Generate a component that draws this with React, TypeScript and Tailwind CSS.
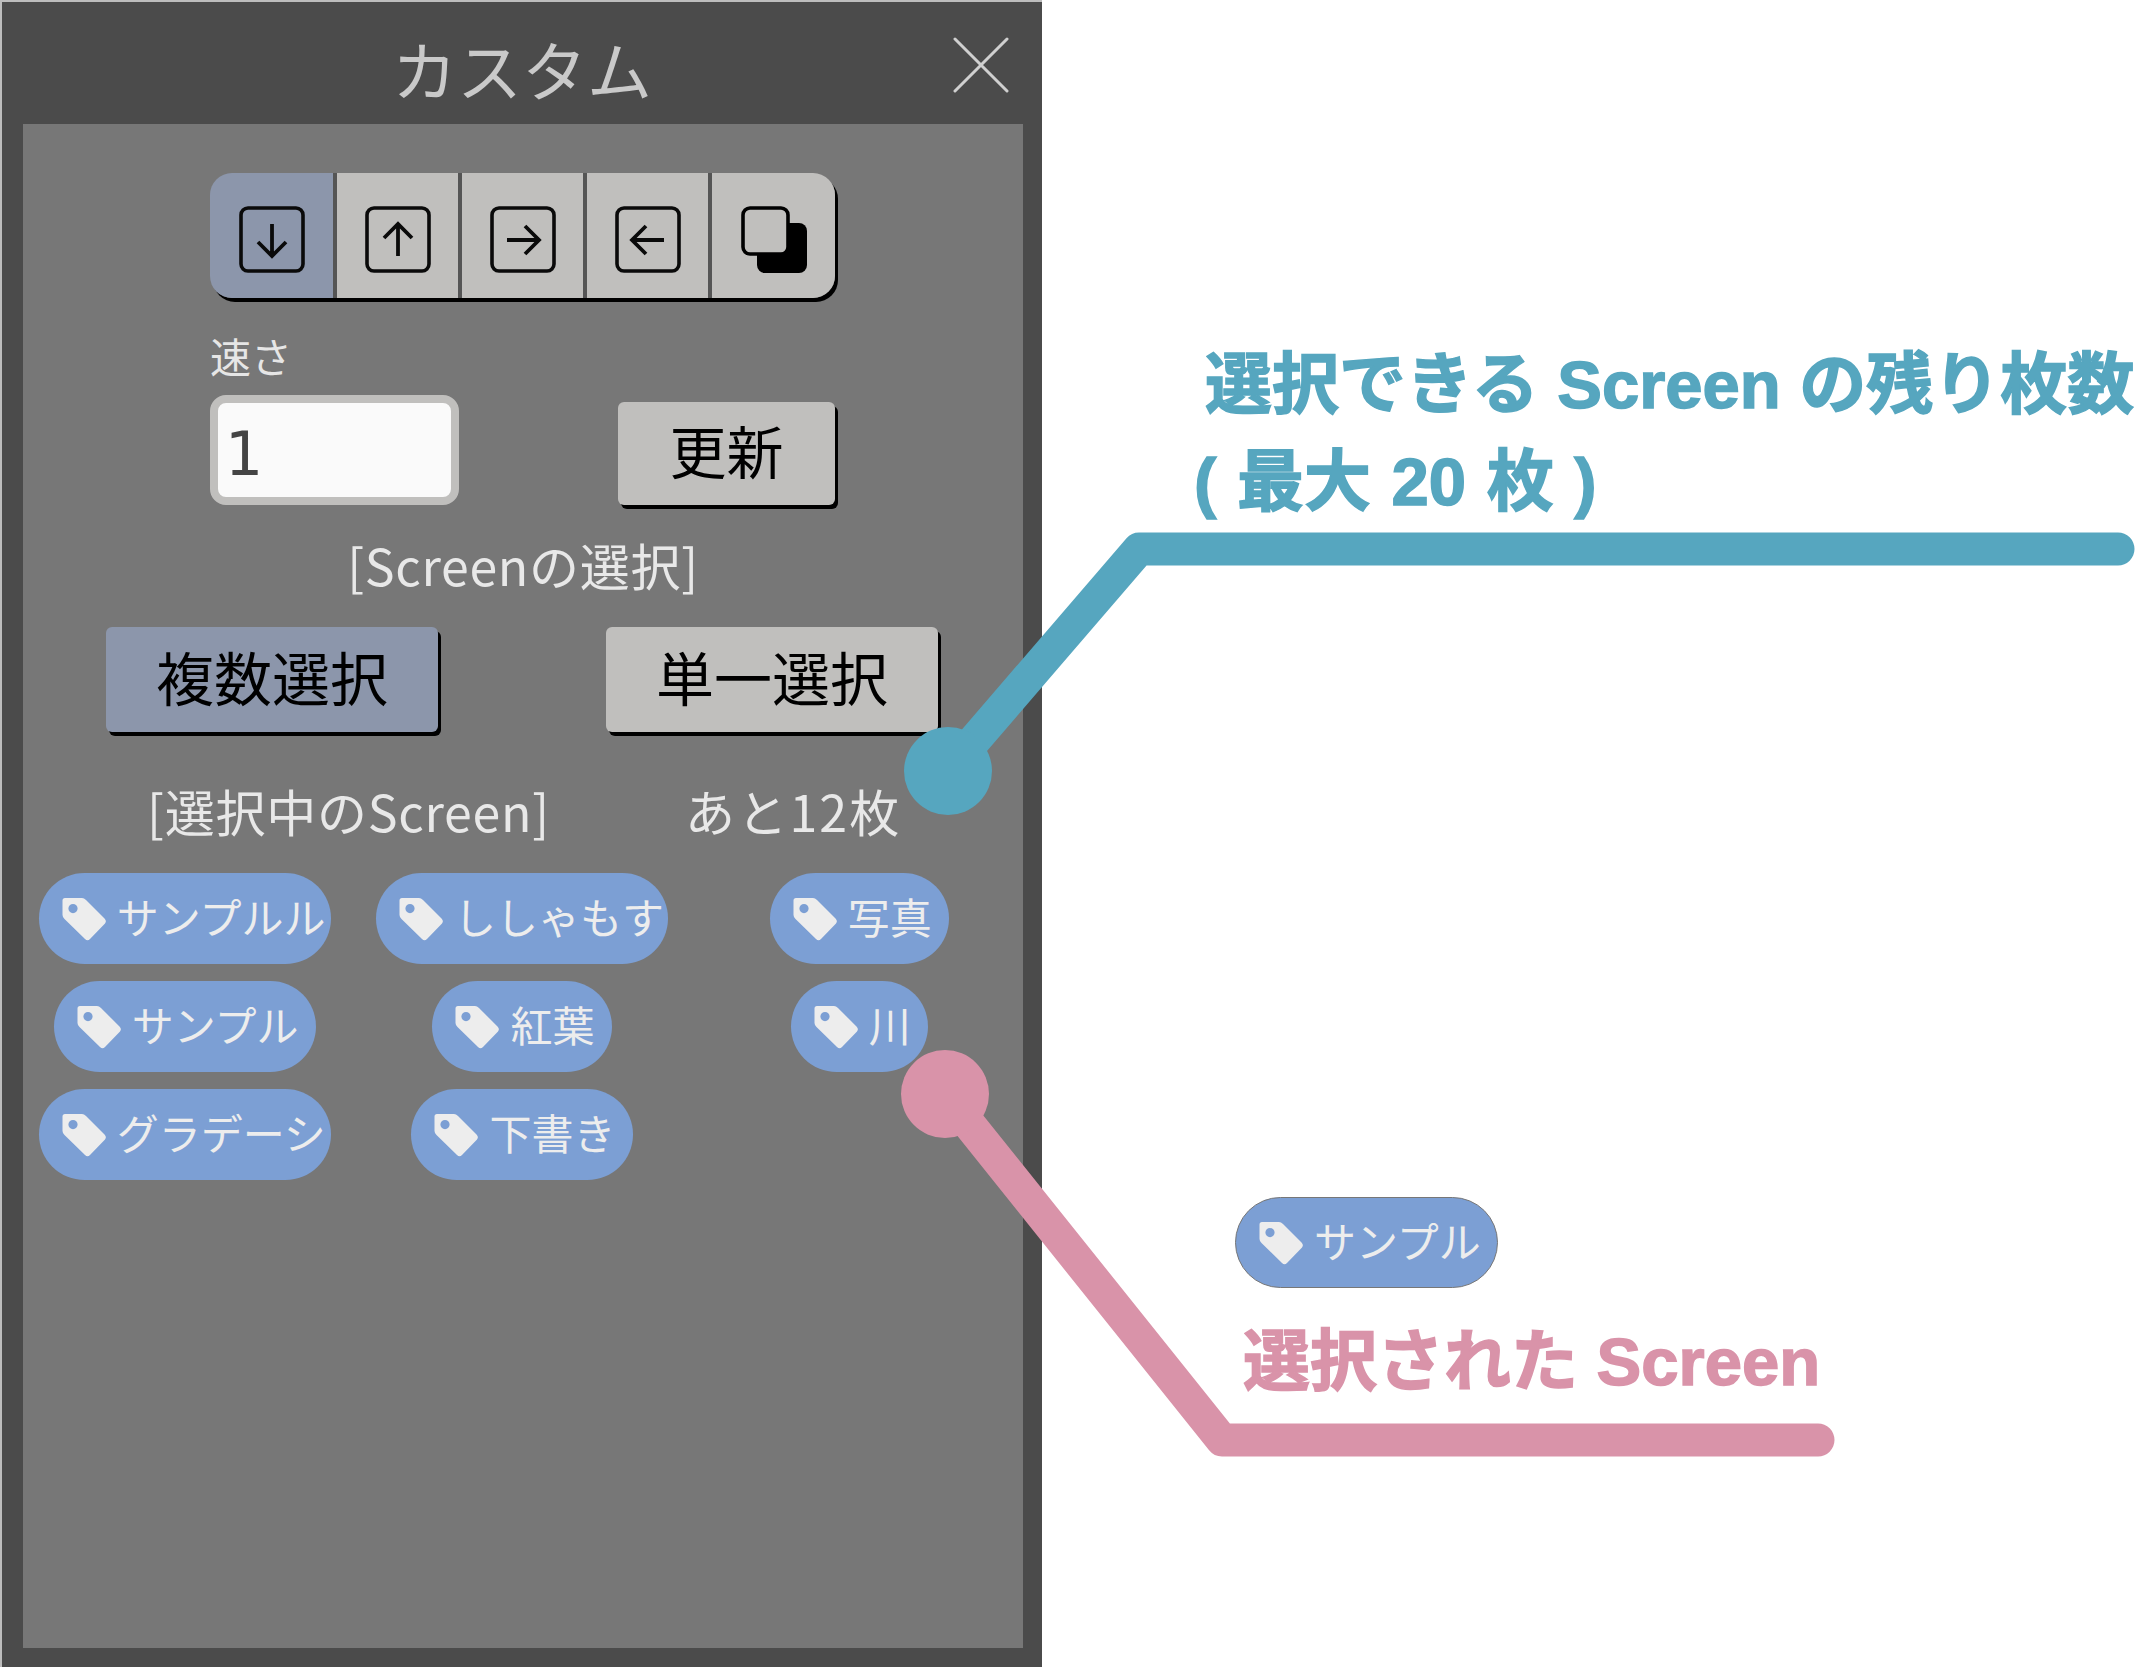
import React from "react";

function TagIcon() {
  return (
    <svg viewBox="0 0 44 44" className="w-[44px] h-[44px] shrink-0">
      <path
        fillRule="evenodd"
        fill="#ededed"
        d="M3 1 H20 Q22 1 24 3 L42.5 21.5 Q45 24 43 26.5 L28 42 Q25.5 44.5 23 42 L2.5 22 Q0.5 20 0.5 18 V3.5 Q0.5 1 3 1 Z M11 7 A4.6 4.6 0 1 0 11 16.2 A4.6 4.6 0 1 0 11 7 Z"
      />
    </svg>
  );
}

function Pill({ label, outlined }: { label: string; outlined?: boolean }) {
  return (
    <div
      className={
        "flex items-center h-[91px] max-w-[292px] rounded-full bg-[#7c9fd4] pl-[23px] pr-[17px] gap-[11px] overflow-hidden whitespace-nowrap shrink-0 " +
        (outlined ? "border border-[#777777]" : "")
      }
    >
      <TagIcon />
      <span className="text-[42px] leading-none text-[#ededed] mt-[-6px]">{label}</span>
    </div>
  );
}

function ArrowBox({ d }: { d: string }) {
  return (
    <svg viewBox="0 0 66 67" className="w-[66px] h-[67px]" fill="none" stroke="#0a0a0a">
      <rect x="2" y="2" width="62" height="63" rx="7" strokeWidth="3.6" />
      <path d={d} strokeWidth="3.8" />
    </svg>
  );
}

function SegItem({ first, last, children }: { first?: boolean; last?: boolean; children: React.ReactNode }) {
  return (
    <div
      className={
        (first ? "w-[127px] bg-[#8c96ab] " : last ? "w-[123px] bg-[#c0bfbd] " : "w-[125px] bg-[#c0bfbd] ") +
        (last ? "" : "border-r-4 border-[#555555] ") +
        "h-full flex items-center justify-center pt-[8px]"
      }
    >
      {children}
    </div>
  );
}

function Btn({ w, active, size, children }: { w: string; active?: boolean; size: string; children: React.ReactNode }) {
  return (
    <div
      className={
        w +
        " rounded-[6px] flex items-center justify-center text-black shadow-[3px_4px_0_#000] " +
        size +
        (active ? " bg-[#8c96ab]" : " bg-[#c0bfbd]")
      }
    >
      <span className="mt-[-8px]">{children}</span>
    </div>
  );
}

export default function App() {
  return (
    <div className="relative w-[2136px] h-[1667px] bg-white overflow-hidden flex font-['Noto_Sans_CJK_JP',sans-serif]">
      <div className="w-[1042px] h-[1667px] pl-[2px] pt-[2px] bg-[#bdbdbd] shrink-0">
        <div className="w-[1040px] h-[1665px] bg-[#4b4b4b] flex flex-col">
          <div className="relative h-[122px] flex items-center justify-center shrink-0">
            <span className="text-[65px] leading-none text-[#c9c9c9] mt-[10px]">カスタム</span>
            <svg viewBox="0 0 56 56" className="absolute left-[951px] top-[35px] w-[56px] h-[56px]" stroke="#d0d0d0" strokeWidth="3" strokeLinecap="round">
              <path d="M2 2 L54 54 M54 2 L2 54" />
            </svg>
          </div>

          <div className="ml-[21px] w-[1000px] h-[1524px] bg-[#777777] flex flex-col">
            <div className="ml-[187px] mt-[49px] w-[625px] h-[125px] flex rounded-[22px] overflow-hidden shadow-[3px_4px_0_#000] shrink-0">
              <SegItem first>
                <ArrowBox d="M33 18 V50 M19 36 L33 50 L47 36" />
              </SegItem>
              <SegItem>
                <ArrowBox d="M33 50 V18 M19 32 L33 18 L47 32" />
              </SegItem>
              <SegItem>
                <ArrowBox d="M17 34 H49 M35 20 L49 34 L35 48" />
              </SegItem>
              <SegItem>
                <ArrowBox d="M49 34 H17 M31 20 L17 34 L31 48" />
              </SegItem>
              <SegItem last>
                <svg viewBox="0 0 66 67" className="w-[66px] h-[67px]">
                  <rect x="16" y="17" width="50" height="50" rx="8" fill="#000" />
                  <rect x="2" y="2" width="45" height="46" rx="7" fill="#c0bfbd" stroke="#000" strokeWidth="3.6" />
                </svg>
              </SegItem>
            </div>

            <div className="ml-[187px] mt-[29px] h-[56px] leading-[56px] text-[41px] text-[#e6e6e6]">速さ</div>

            <div className="ml-[187px] mt-[12px] w-[625px] h-[110px] flex items-end justify-between">
              <div className="w-[249px] h-[110px] rounded-[16px] border-[8px] border-[#c0bfbd] bg-[#fafafa] flex items-center pl-[7px] pt-[8px] text-[60px] leading-none text-[#444444] font-['DejaVu_Sans',sans-serif]">
                1
              </div>
              <Btn w="w-[217px] h-[103px]" size="text-[57px] leading-none">更新</Btn>
            </div>

            <div className="mt-[29px] h-[60px] leading-[60px] text-center text-[50px] tracking-[0.7px] text-[#e8e8e8] whitespace-nowrap">[Screenの選択]</div>

            <div className="ml-[83px] mt-[33px] w-[832px] flex justify-between shrink-0">
              <Btn w="w-[332px] h-[105px]" active size="text-[58px] leading-none">複数選択</Btn>
              <Btn w="w-[332px] h-[105px]" size="text-[58px] leading-none">単一選択</Btn>
            </div>

            <div className="mt-[48px] h-[60px] flex items-center text-[50px] leading-none text-[#e8e8e8] whitespace-nowrap">
              <span className="ml-[124px] w-[538px] tracking-[0.75px]">[選択中のScreen]</span>
              <span className="tracking-[2.2px]">あと12枚</span>
            </div>

            <div className="ml-[-7px] mt-[33px] w-[1012px] grid grid-cols-3 gap-y-[17px] justify-items-center">
              <Pill label="サンプルル" />
              <Pill label="ししゃもす" />
              <Pill label="写真" />
              <Pill label="サンプル" />
              <Pill label="紅葉" />
              <Pill label="川" />
              <Pill label="グラデーシ" />
              <Pill label="下書き" />
            </div>
          </div>
        </div>
      </div>

      <div className="flex flex-col pt-[336px] whitespace-nowrap shrink-0">
        <div className="ml-[163px] h-[97px] flex items-center text-[67px] leading-none font-bold text-[#56a6bf] [-webkit-text-stroke:1.5px_#56a6bf] font-['Liberation_Sans','Noto_Sans_CJK_JP',sans-serif]">
          選択できる Screen の残り枚数
        </div>
        <div className="ml-[152px] h-[97px] flex items-center text-[67px] leading-none font-bold text-[#56a6bf] [-webkit-text-stroke:1.5px_#56a6bf] [word-spacing:2px] font-['Liberation_Sans','Noto_Sans_CJK_JP',sans-serif]">
          ( 最大 20 枚 )
        </div>
        <div className="ml-[193px] mt-[667px] w-[263px]">
          <Pill label="サンプル" outlined />
        </div>
        <div className="ml-[201px] mt-[25px] h-[97px] flex items-center text-[67px] leading-none font-bold text-[#d993a9] [-webkit-text-stroke:1.5px_#d993a9] font-['Liberation_Sans','Noto_Sans_CJK_JP',sans-serif]">
          選択された Screen
        </div>
      </div>

      <svg className="absolute left-0 top-0 w-[2136px] h-[1667px] pointer-events-none" viewBox="0 0 2136 1667" fill="none">
        <path d="M948 771 L1139 549 H2118" stroke="#56a6bf" strokeWidth="33" strokeLinecap="round" strokeLinejoin="round" />
        <circle cx="948" cy="771" r="44" fill="#56a6bf" />
        <path d="M945 1094 L1222 1440 H1818" stroke="#d993a9" strokeWidth="33" strokeLinecap="round" strokeLinejoin="round" />
        <circle cx="945" cy="1094" r="44" fill="#d993a9" />
      </svg>
    </div>
  );
}
